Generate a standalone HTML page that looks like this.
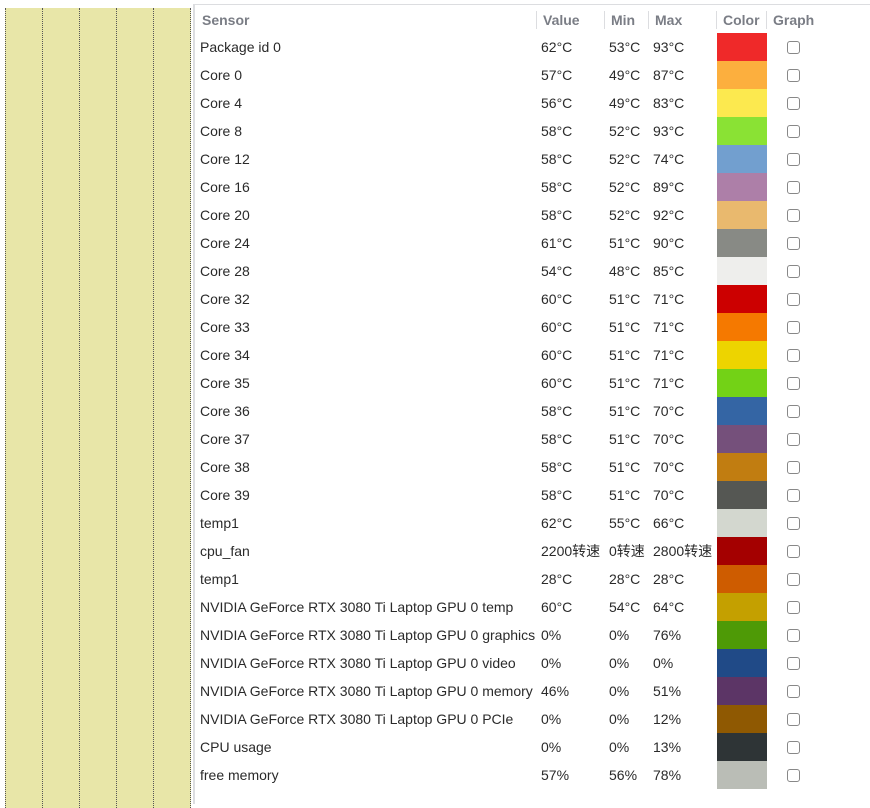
<!DOCTYPE html>
<html><head><meta charset="utf-8"><style>
*{margin:0;padding:0;box-sizing:border-box}
body{width:870px;height:798px;background:#fff;position:relative;overflow:hidden;font-family:"Liberation Sans","Noto Sans CJK SC",sans-serif;font-size:14px;color:#2a2a2a}
.yel{position:absolute;left:5px;top:8px;width:186px;height:800px;background:#e8e6a8}
.dl{position:absolute;top:8px;height:800px;border-left:1px dotted #555}
.vb{position:absolute;left:193px;top:4px;width:2px;height:800px;background:#dcdde0}
.tb{position:absolute;left:195px;top:4px;width:680px;height:1px;background:#dcdde0}
.hd{position:absolute;top:8px;height:24px;line-height:24px;font-weight:bold;color:#7a7d85;font-size:14px}
.sep{position:absolute;top:11px;height:18px;width:1px;background:#dcdde0}
.r{position:absolute;left:0;width:870px;height:28px;line-height:28px}
.r span{position:absolute;top:0;white-space:nowrap}
.sw{position:absolute;left:717px;width:50px;height:28px;top:0}
.cb{position:absolute;left:787px;top:8px;width:13px;height:13px;border:1px solid #888;border-radius:3px;background:#fff}
</style></head><body>
<div class="yel"></div>
<div class="dl" style="left:5px"></div><div class="dl" style="left:42px"></div><div class="dl" style="left:79px"></div><div class="dl" style="left:116px"></div><div class="dl" style="left:153px"></div><div class="dl" style="left:190px"></div>
<div class="vb"></div><div class="tb"></div>
<div class="hd" style="left:202px">Sensor</div>
<div class="sep" style="left:536px"></div><div class="hd" style="left:543px">Value</div>
<div class="sep" style="left:604px"></div><div class="hd" style="left:611px">Min</div>
<div class="sep" style="left:648px"></div><div class="hd" style="left:655px">Max</div>
<div class="sep" style="left:716px"></div><div class="hd" style="left:723px">Color</div>
<div class="sep" style="left:766px"></div><div class="hd" style="left:773px">Graph</div>
<div id="rows"></div>
<div class="r" style="top:33px"><span style="left:200px">Package id 0</span><span style="left:541px">62°C</span><span style="left:609px">53°C</span><span style="left:653px">93°C</span><div class="sw" style="background:#ef2929"></div><div class="cb"></div></div>
<div class="r" style="top:61px"><span style="left:200px">Core 0</span><span style="left:541px">57°C</span><span style="left:609px">49°C</span><span style="left:653px">87°C</span><div class="sw" style="background:#fcaf3e"></div><div class="cb"></div></div>
<div class="r" style="top:89px"><span style="left:200px">Core 4</span><span style="left:541px">56°C</span><span style="left:609px">49°C</span><span style="left:653px">83°C</span><div class="sw" style="background:#fce94f"></div><div class="cb"></div></div>
<div class="r" style="top:117px"><span style="left:200px">Core 8</span><span style="left:541px">58°C</span><span style="left:609px">52°C</span><span style="left:653px">93°C</span><div class="sw" style="background:#8ae234"></div><div class="cb"></div></div>
<div class="r" style="top:145px"><span style="left:200px">Core 12</span><span style="left:541px">58°C</span><span style="left:609px">52°C</span><span style="left:653px">74°C</span><div class="sw" style="background:#729fcf"></div><div class="cb"></div></div>
<div class="r" style="top:173px"><span style="left:200px">Core 16</span><span style="left:541px">58°C</span><span style="left:609px">52°C</span><span style="left:653px">89°C</span><div class="sw" style="background:#ad7fa8"></div><div class="cb"></div></div>
<div class="r" style="top:201px"><span style="left:200px">Core 20</span><span style="left:541px">58°C</span><span style="left:609px">52°C</span><span style="left:653px">92°C</span><div class="sw" style="background:#e9b96e"></div><div class="cb"></div></div>
<div class="r" style="top:229px"><span style="left:200px">Core 24</span><span style="left:541px">61°C</span><span style="left:609px">51°C</span><span style="left:653px">90°C</span><div class="sw" style="background:#888a85"></div><div class="cb"></div></div>
<div class="r" style="top:257px"><span style="left:200px">Core 28</span><span style="left:541px">54°C</span><span style="left:609px">48°C</span><span style="left:653px">85°C</span><div class="sw" style="background:#eeeeec"></div><div class="cb"></div></div>
<div class="r" style="top:285px"><span style="left:200px">Core 32</span><span style="left:541px">60°C</span><span style="left:609px">51°C</span><span style="left:653px">71°C</span><div class="sw" style="background:#cc0000"></div><div class="cb"></div></div>
<div class="r" style="top:313px"><span style="left:200px">Core 33</span><span style="left:541px">60°C</span><span style="left:609px">51°C</span><span style="left:653px">71°C</span><div class="sw" style="background:#f57900"></div><div class="cb"></div></div>
<div class="r" style="top:341px"><span style="left:200px">Core 34</span><span style="left:541px">60°C</span><span style="left:609px">51°C</span><span style="left:653px">71°C</span><div class="sw" style="background:#edd400"></div><div class="cb"></div></div>
<div class="r" style="top:369px"><span style="left:200px">Core 35</span><span style="left:541px">60°C</span><span style="left:609px">51°C</span><span style="left:653px">71°C</span><div class="sw" style="background:#73d216"></div><div class="cb"></div></div>
<div class="r" style="top:397px"><span style="left:200px">Core 36</span><span style="left:541px">58°C</span><span style="left:609px">51°C</span><span style="left:653px">70°C</span><div class="sw" style="background:#3465a4"></div><div class="cb"></div></div>
<div class="r" style="top:425px"><span style="left:200px">Core 37</span><span style="left:541px">58°C</span><span style="left:609px">51°C</span><span style="left:653px">70°C</span><div class="sw" style="background:#75507b"></div><div class="cb"></div></div>
<div class="r" style="top:453px"><span style="left:200px">Core 38</span><span style="left:541px">58°C</span><span style="left:609px">51°C</span><span style="left:653px">70°C</span><div class="sw" style="background:#c17d11"></div><div class="cb"></div></div>
<div class="r" style="top:481px"><span style="left:200px">Core 39</span><span style="left:541px">58°C</span><span style="left:609px">51°C</span><span style="left:653px">70°C</span><div class="sw" style="background:#555753"></div><div class="cb"></div></div>
<div class="r" style="top:509px"><span style="left:200px">temp1</span><span style="left:541px">62°C</span><span style="left:609px">55°C</span><span style="left:653px">66°C</span><div class="sw" style="background:#d3d7cf"></div><div class="cb"></div></div>
<div class="r" style="top:537px"><span style="left:200px">cpu_fan</span><span style="left:541px">2200转速</span><span style="left:609px">0转速</span><span style="left:653px">2800转速</span><div class="sw" style="background:#a40000"></div><div class="cb"></div></div>
<div class="r" style="top:565px"><span style="left:200px">temp1</span><span style="left:541px">28°C</span><span style="left:609px">28°C</span><span style="left:653px">28°C</span><div class="sw" style="background:#ce5c00"></div><div class="cb"></div></div>
<div class="r" style="top:593px"><span style="left:200px">NVIDIA GeForce RTX 3080 Ti Laptop GPU 0 temp</span><span style="left:541px">60°C</span><span style="left:609px">54°C</span><span style="left:653px">64°C</span><div class="sw" style="background:#c4a000"></div><div class="cb"></div></div>
<div class="r" style="top:621px"><span style="left:200px">NVIDIA GeForce RTX 3080 Ti Laptop GPU 0 graphics</span><span style="left:541px">0%</span><span style="left:609px">0%</span><span style="left:653px">76%</span><div class="sw" style="background:#4e9a06"></div><div class="cb"></div></div>
<div class="r" style="top:649px"><span style="left:200px">NVIDIA GeForce RTX 3080 Ti Laptop GPU 0 video</span><span style="left:541px">0%</span><span style="left:609px">0%</span><span style="left:653px">0%</span><div class="sw" style="background:#204a87"></div><div class="cb"></div></div>
<div class="r" style="top:677px"><span style="left:200px">NVIDIA GeForce RTX 3080 Ti Laptop GPU 0 memory</span><span style="left:541px">46%</span><span style="left:609px">0%</span><span style="left:653px">51%</span><div class="sw" style="background:#5c3566"></div><div class="cb"></div></div>
<div class="r" style="top:705px"><span style="left:200px">NVIDIA GeForce RTX 3080 Ti Laptop GPU 0 PCIe</span><span style="left:541px">0%</span><span style="left:609px">0%</span><span style="left:653px">12%</span><div class="sw" style="background:#8f5902"></div><div class="cb"></div></div>
<div class="r" style="top:733px"><span style="left:200px">CPU usage</span><span style="left:541px">0%</span><span style="left:609px">0%</span><span style="left:653px">13%</span><div class="sw" style="background:#2e3436"></div><div class="cb"></div></div>
<div class="r" style="top:761px"><span style="left:200px">free memory</span><span style="left:541px">57%</span><span style="left:609px">56%</span><span style="left:653px">78%</span><div class="sw" style="background:#babdb6"></div><div class="cb"></div></div>
</body></html>
